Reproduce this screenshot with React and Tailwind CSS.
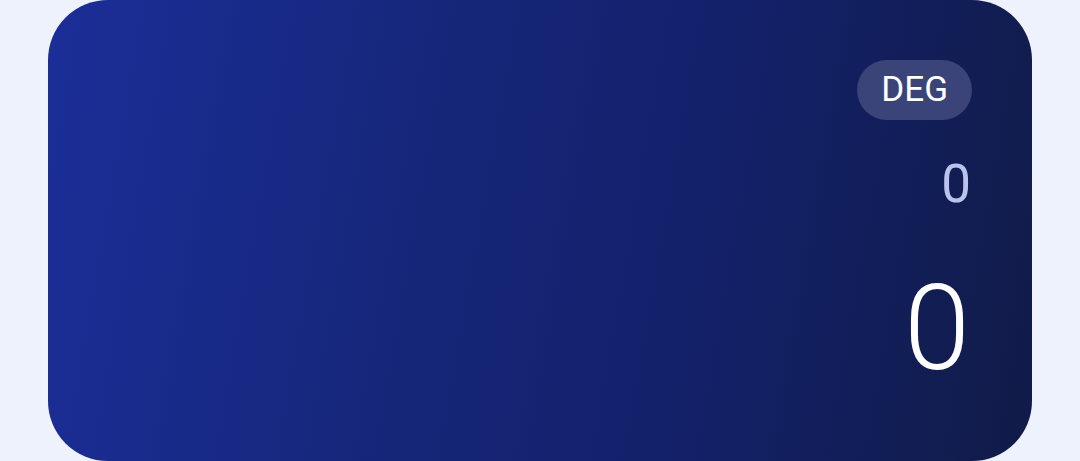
import React from 'react';

const App = () => {
    return (
        <div className="w-[1080px] h-[461px] bg-[#eef2fd] px-12 overflow-hidden" style={{ fontFamily: 'Roboto, "Open Sans", sans-serif' }}>
            {/* Display card */}
            <div className="h-[461px] w-full rounded-[60px] bg-[linear-gradient(100deg,#1b2e98_0%,#16277c_35%,#13216a_65%,#111b48_100%)] flex flex-col items-end pt-[60px] pr-[62px]">
                <span className="h-[60px] px-[24px] -mr-[2px] rounded-full bg-[#3a4478] text-white text-[35px] leading-[60px]">
                    DEG
                </span>
                <div className="mt-[34px] -mr-[1px] text-[53px] leading-[60px] font-normal text-[#b9c3ec]">
                    0
                </div>
                <div className="mt-[55px] text-[119px] leading-[119px] font-light text-white">
                    0
                </div>
            </div>
        </div>
    );
};

export default App;
